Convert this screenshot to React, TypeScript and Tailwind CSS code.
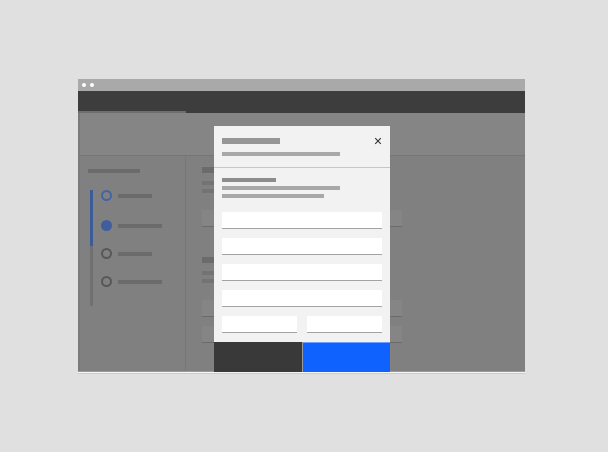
import React from "react";

function Step({ state, labelW, mt }: { state: "active" | "current" | "idle"; labelW: string; mt: string }) {
  const circle =
    state === "current"
      ? "w-[11px] h-[11px] rounded-full bg-[#405d9e]"
      : state === "active"
      ? "w-[11px] h-[11px] rounded-full border-2 border-[#4463a3]"
      : "w-[11px] h-[11px] rounded-full border-2 border-[#575757]";
  return (
    <div className={`flex items-center gap-[6px] ${mt}`}>
      <div className={circle} />
      <div className={`h-[4px] bg-[#6b6b6b] ${labelW}`} />
    </div>
  );
}

export default function App() {
  return (
    <div className="w-[608px] h-[452px] bg-[#e0e0e0] overflow-hidden flex items-start">
      <div className="ml-[78px] mt-[79px] w-[447px] h-[295px] relative flex flex-col">
        {/* title bar */}
        <div className="h-[12px] bg-[#a9a9a9] flex items-center pl-[4px] gap-[4px]">
          <div className="w-[4px] h-[4px] rounded-full bg-white" />
          <div className="w-[4px] h-[4px] rounded-full bg-white" />
        </div>
        {/* dark app bar */}
        <div className="h-[20px] bg-[#3d3d3d]" />
        <div className="h-[2px] flex">
          <div className="w-[108px] bg-[#6e6e6e]" />
          <div className="flex-1 bg-[#3d3d3d]" />
        </div>
        {/* dimmed body */}
        <div className="h-[258px] flex">
          <div className="w-[2px] bg-[#7a7a7a]" />
          <div className="flex-1 flex flex-col">
            <div className="h-[43px] bg-[#858585] border-b border-[#767676]" />
            <div className="flex-1 flex bg-[#808080]">
              {/* sidebar */}
              <div className="w-[106px] border-r border-[#777777] pl-[8px] pt-[13px] flex flex-col">
                <div className="w-[52px] h-[4px] bg-[#6b6b6b]" />
                <div className="mt-[17px] flex items-start">
                  <div className="ml-[2px] w-[3px] flex flex-col">
                    <div className="h-[56px] bg-[#3d5a99]" />
                    <div className="h-[60px] bg-[#707070]" />
                  </div>
                  <div className="ml-[8px] flex flex-col">
                    <Step state="active" labelW="w-[34px]" mt="" />
                    <Step state="current" labelW="w-[44px]" mt="mt-[19px]" />
                    <Step state="idle" labelW="w-[34px]" mt="mt-[17px]" />
                    <Step state="idle" labelW="w-[44px]" mt="mt-[17px]" />
                  </div>
                </div>
              </div>
              {/* main */}
              <div className="flex-1 pl-[16px] pt-[11px] flex flex-col">
                <div className="w-[100px] h-[6px] bg-[#6b6b6b]" />
                <div className="mt-[8px] w-[120px] h-[4px] bg-[#737373]" />
                <div className="mt-[4px] w-[110px] h-[4px] bg-[#737373]" />
                <div className="mt-[17px] w-[200px] h-[17px] bg-[#858585] border-b border-[#6a6a6a]" />
                <div className="mt-[30px] w-[100px] h-[6px] bg-[#6b6b6b]" />
                <div className="mt-[8px] w-[120px] h-[4px] bg-[#737373]" />
                <div className="mt-[4px] w-[110px] h-[4px] bg-[#737373]" />
                <div className="mt-[17px] w-[200px] h-[17px] bg-[#858585] border-b border-[#6a6a6a]" />
                <div className="mt-[9px] w-[200px] h-[17px] bg-[#858585] border-b border-[#6a6a6a]" />
              </div>
            </div>
          </div>
        </div>
        <div className="h-[1px] bg-[#9a9a9a]" />
        <div className="h-[1px] bg-[#f6f6f6]" />
        <div className="h-[1px] bg-[#cccccc]" />

        {/* modal */}
        <div className="absolute left-[136px] top-[47px] w-[176px] h-[246px] bg-[#f2f2f2] flex flex-col">
          <div className="px-[8px] pt-[12px] pb-[11px]">
            <div className="flex items-center justify-between h-[6px]">
              <div className="w-[58px] h-[6px] bg-[#969696]" />
              <svg width="8" height="8" viewBox="0 0 8 8">
                <path d="M1.2 1.2 L6.8 6.8 M6.8 1.2 L1.2 6.8" stroke="#3a3a3a" strokeWidth="1.2" />
              </svg>
            </div>
            <div className="mt-[8px] w-[118px] h-[4px] bg-[#a8a8a8]" />
          </div>
          <div className="h-[1px] bg-[#c6c6c6]" />
          <div className="px-[8px] pt-[10px] flex flex-col">
            <div className="w-[54px] h-[4px] bg-[#8c8c8c]" />
            <div className="mt-[4px] w-[118px] h-[4px] bg-[#a8a8a8]" />
            <div className="mt-[4px] w-[102px] h-[4px] bg-[#a8a8a8]" />
            <div className="mt-[14px] flex flex-col gap-[9px]">
              <div className="h-[17px] bg-white border-b border-[#a3a3a3]" />
              <div className="h-[17px] bg-white border-b border-[#a3a3a3]" />
              <div className="h-[17px] bg-white border-b border-[#a3a3a3]" />
              <div className="h-[17px] bg-white border-b border-[#a3a3a3]" />
              <div className="flex gap-[10px]">
                <div className="flex-1 h-[17px] bg-white border-b border-[#a3a3a3]" />
                <div className="flex-1 h-[17px] bg-white border-b border-[#a3a3a3]" />
              </div>
            </div>
          </div>
          <div className="mt-auto h-[30px] flex">
            <div className="w-[88px] bg-[#393939]" />
            <div className="w-[1px] bg-[#9a9a9a]" />
            <div className="flex-1 bg-[#0f62fe] border-t border-[#6f9cff]" />
          </div>
        </div>
      </div>
    </div>
  );
}
